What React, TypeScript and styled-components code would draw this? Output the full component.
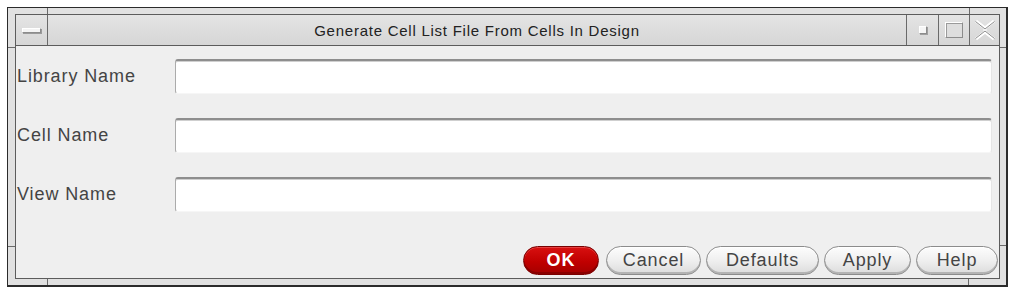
import * as React from "react";
import styled, { createGlobalStyle } from "styled-components";

const Global = createGlobalStyle`
  html, body {
    margin: 0;
    padding: 0;
    background: #ffffff;
  }
  body {
    font-family: "Liberation Sans", Arial, Helvetica, sans-serif;
  }
  * { box-sizing: border-box; }
`;

const Page = styled.div`
  width: 1011px;
  height: 308px;
  padding: 7px 0 0 7px;
`;

const Window = styled.div`
  position: relative;
  width: 1001px;
  height: 280px;
  border: 1px solid #2b2b2b;
  border-right-width: 2px;
  border-bottom-width: 2px;
  background: #e1e1e1;
  padding: 6px 6px 6px 7px;
`;

// little resize-handle ticks that sit across the frame border
const Tick = styled.span<{ $x: number; $y: number; $w: number; $h: number }>`
  position: absolute;
  left: ${(p) => p.$x}px;
  top: ${(p) => p.$y}px;
  width: ${(p) => p.$w}px;
  height: ${(p) => p.$h}px;
  background: #6a6a6a;
`;

const Panel = styled.div`
  height: 100%;
  border: 1px solid #5c5c5c;
  display: flex;
  flex-direction: column;
`;

const TitleBar = styled.div`
  height: 31px;
  display: flex;
  align-items: stretch;
  border-bottom: 1px solid #5c5c5c;
  background: linear-gradient(#e4e4e4, #d6d6d6);
`;

const TitleButton = styled.div<{ $w: number }>`
  width: ${(p) => p.$w}px;
  flex: none;
  display: flex;
  align-items: center;
  justify-content: center;
  border-left: 1px solid #6a6a6a;
  &:first-child {
    border-left: none;
    border-right: 1px solid #6a6a6a;
  }
`;

const MenuBar = styled.span`
  width: 19px;
  height: 5px;
  background: #f4f4f4;
  border: 1px solid #8c8c8c;
  border-top-color: #fff;
  border-left-color: #fff;
  box-shadow: 1px 1px 0 #9a9a9a;
`;

const MinBox = styled.span`
  width: 8px;
  height: 8px;
  background: #f6f6f6;
  border: 1px solid #8c8c8c;
  border-top-color: #fff;
  border-left-color: #fff;
  box-shadow: 1px 1px 0 #a0a0a0;
`;

const MaxBox = styled.span`
  width: 18px;
  height: 16px;
  background: #dedede;
  border: 1px solid #8c8c8c;
  border-top-color: #fff;
  border-left-color: #fff;
  box-shadow: inset 1px 1px 0 #9a9a9a;
`;

const Title = styled.div`
  flex: 1;
  display: flex;
  align-items: center;
  justify-content: center;
  font-size: 15px;
  letter-spacing: 0.75px;
  color: #222;
`;

const Content = styled.div`
  flex: 1;
  display: flex;
  flex-direction: column;
  background: #efefef;
  padding: 13px 1px 3px 1px;
`;

const Form = styled.div`
  display: grid;
  grid-template-columns: 158px 1fr;
  row-gap: 24px;
  padding-right: 6px;
`;

const Label = styled.label`
  display: flex;
  align-items: center;
  font-size: 18px;
  letter-spacing: 0.9px;
  color: #444;
`;

const Field = styled.input`
  height: 35px;
  width: 100%;
  background: #fff;
  border: none;
  border-top: 2px solid #8e8e8e;
  border-left: 1px solid #ababab;
  border-right: 1px solid #e6e6e6;
  border-bottom: 1px solid #f6f6f6;
  border-radius: 3px;
  box-shadow: inset 0 1px 0 #cfcfcf;
  outline: none;
  font: inherit;
`;

const Actions = styled.div`
  margin-top: auto;
  display: flex;
  justify-content: flex-end;
  gap: 5px;
`;

const Button = styled.button<{ $w: number; $primary?: boolean }>`
  width: ${(p) => p.$w}px;
  height: 29px;
  border-radius: 15px;
  font-family: "Liberation Sans", Arial, sans-serif;
  font-size: 18px;
  letter-spacing: ${(p) => (p.$primary ? "1px" : "0.9px")};
  padding: 0;
  border: 1px solid ${(p) => (p.$primary ? "#7a0000" : "#8c8c8c")};
  color: ${(p) => (p.$primary ? "#fff" : "#444")};
  font-weight: ${(p) => (p.$primary ? 700 : 400)};
  background: ${(p) =>
    p.$primary
      ? "linear-gradient(#d81010, #c00000 55%, #a40000)"
      : "linear-gradient(#fdfdfd, #efefef 50%, #dcdcdc)"};
  box-shadow: ${(p) =>
    p.$primary
      ? "inset 0 -2px 0 #8a0000, inset 0 1px 0 #e64040"
      : "inset 0 -2px 0 #b4b4b4, inset 0 1px 0 #fff"};
  &:first-child {
    margin-right: 2px;
  }
`;

const Close = () => (
  <svg width="22" height="20" viewBox="0 0 22 20">
    <path
      d="M2 1 L11 8 L20 1 M2 19 L11 12 L20 19 M11 8 L11 12"
      stroke="#fff"
      strokeWidth="3"
      fill="none"
    />
    <path
      d="M1.5 1.5 L11 9 L20.5 1.5 M1.5 18.5 L11 11 L20.5 18.5"
      stroke="#8c8c8c"
      strokeWidth="1"
      fill="none"
    />
  </svg>
);

const fields = ["Library Name", "Cell Name", "View Name"];

const buttons: { text: string; w: number; primary?: boolean }[] = [
  { text: "OK", w: 76, primary: true },
  { text: "Cancel", w: 95 },
  { text: "Defaults", w: 113 },
  { text: "Apply", w: 87 },
  { text: "Help", w: 82 },
];

const App: React.FC = () => {
  return (
    <Page>
      <Global />
      <Window>
        <Tick $x={39} $y={0} $w={1} $h={6} />
        <Tick $x={961} $y={0} $w={1} $h={6} />
        <Tick $x={0} $y={39} $w={7} $h={1} />
        <Tick $x={0} $y={238} $w={7} $h={1} />
        <Tick $x={992} $y={39} $w={6} $h={1} />
        <Tick $x={992} $y={237} $w={6} $h={1} />
        <Tick $x={39} $y={271} $w={1} $h={6} />
        <Tick $x={960} $y={271} $w={1} $h={6} />
        <Panel>
          <TitleBar>
            <TitleButton $w={32}>
              <MenuBar />
            </TitleButton>
            <Title>Generate Cell List File From Cells In Design</Title>
            <TitleButton $w={32}>
              <MinBox />
            </TitleButton>
            <TitleButton $w={31}>
              <MaxBox />
            </TitleButton>
            <TitleButton $w={30}>
              <Close />
            </TitleButton>
          </TitleBar>
          <Content>
            <Form>
              {fields.map((f) => (
                <React.Fragment key={f}>
                  <Label>{f}</Label>
                  <Field type="text" />
                </React.Fragment>
              ))}
            </Form>
            <Actions>
              {buttons.map((b) => (
                <Button key={b.text} $w={b.w} $primary={b.primary}>
                  {b.text}
                </Button>
              ))}
            </Actions>
          </Content>
        </Panel>
      </Window>
    </Page>
  );
};

export default App;
